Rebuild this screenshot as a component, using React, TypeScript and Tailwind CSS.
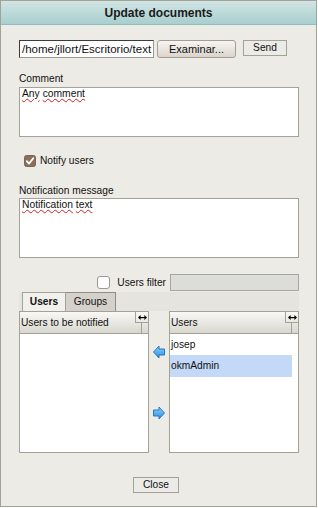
import type { ReactNode } from "react";

// Legacy GWT-style "Update documents" dialog.
function ResizeGrip() {
  return (
    <div className="flex w-[13px] shrink-0 flex-col">
      <div className="flex h-[11px] items-center justify-center border-b border-l border-[#a3a297]">
        <svg width="9" height="5" viewBox="0 0 9 5">
          <path d="M0 2.5 L2.6 0 V5 Z M9 2.5 L6.4 0 V5 Z" fill="#000" />
          <rect x="2" y="2" width="5" height="1.2" fill="#000" />
        </svg>
      </div>
      <div className="ml-[6px] flex-1 border-l border-[#a3a297]" />
    </div>
  );
}

function ListBox({ title, children }: { title: string; children?: ReactNode }) {
  return (
    <div className="flex h-[142px] w-[130px] shrink-0 flex-col border border-[#a3a297] bg-white">
      <div className="flex h-[22px] shrink-0 border-b border-[#a3a297] bg-gradient-to-b from-[#f9f8f5] to-[#d8d7cf]">
        <div className="flex flex-1 items-center pl-[1px] leading-[12px]">{title}</div>
        <ResizeGrip />
      </div>
      <div className="flex flex-col">{children}</div>
    </div>
  );
}

function Arrow({ dir }: { dir: "left" | "right" }) {
  return (
    <svg width="12" height="14" viewBox="0 0 12 14" className={dir === "right" ? "-scale-x-100" : ""}>
      <defs>
        <linearGradient id={`ag-${dir}`} x1="0" y1="0" x2="0" y2="1">
          <stop offset="0" stopColor="#8fd0fb" />
          <stop offset="1" stopColor="#2a8ee0" />
        </linearGradient>
      </defs>
      <path d="M0.5 7 L6 1 V4 H11.5 V10 H6 V13 Z" fill={`url(#ag-${dir})`} stroke="#2477c4" strokeWidth="1" strokeLinejoin="round" />
    </svg>
  );
}

const squiggle = "underline decoration-[#d02020] decoration-wavy decoration-1 underline-offset-[1px]";

export default function App() {
  return (
    <div className="min-h-screen bg-white font-['Liberation_Sans',Arial,sans-serif] text-[10.2px] text-[#111]">
      <div className="flex h-[507px] w-[317px] flex-col border border-[#a3a297] bg-[#edebe6]">
        <div className="flex h-[24px] shrink-0 items-center justify-center border-b border-[#8dbdbc] bg-gradient-to-b from-[#d1e5e4] to-[#a8cfce] text-[12px] font-bold text-[#1b1b1b]">
          Update documents
        </div>

        <div className="flex flex-col pl-[18px] pr-[17px]">
          <div className="mt-[15px] flex items-start">
            <div className="h-[18px] w-[135px] overflow-hidden whitespace-nowrap border border-[#9a9a94] border-l-[#3c3c3c] border-t-[#3c3c3c] bg-white pl-[2px] text-[11.5px] leading-[16px]">
              /home/jllort/Escritorio/text
            </div>
            <button
              type="button"
              className="ml-[3px] h-[18px] w-[79px] rounded-[3px] border border-[#a49d94] bg-gradient-to-b from-[#f7f5f2] to-[#dbd5cc] text-[11px] leading-[16px]"
            >
              Examinar...
            </button>
            <button
              type="button"
              className="ml-[7px] h-[16px] w-[44px] border border-[#a3a29a] bg-[#ecebe7] leading-[14px]"
            >
              Send
            </button>
          </div>

          <div className="mt-[15px] leading-[12px]">Comment</div>
          <div className="mt-[2px] h-[50px] border border-[#a3a297] bg-white pl-[2px] text-[10.3px] leading-[12px]">
            <span className={squiggle}>Any</span> <span className={squiggle}>comment</span>
          </div>

          <div className="mt-[18px] flex h-[12px] items-center">
            <svg width="12" height="12" viewBox="0 0 12 12" className="ml-[5px] shrink-0">
              <rect x="0.5" y="0.5" width="11" height="11" rx="2" fill="#8b6f5c" stroke="#7a6453" />
              <path d="M2.8 6.2 L5 8.6 L9.3 3.2" fill="none" stroke="#fff" strokeWidth="1.8" strokeLinecap="round" strokeLinejoin="round" />
            </svg>
            <span className="ml-[4px] leading-[12px]">Notify users</span>
          </div>

          <div className="mt-[18px] leading-[12px]">Notification message</div>
          <div className="mt-[1px] h-[60px] border border-[#a3a297] bg-white pl-[2px] text-[10.3px] leading-[12px]">
            <span className={squiggle}>Notification</span> <span className={squiggle}>text</span>
          </div>

          <div className="mt-[16px] flex h-[17px] items-center justify-end">
            <div className="h-[13px] w-[13px] rounded-[3px] border border-[#9b9b93] bg-white" />
            <span className="ml-[7px] mr-[4px] leading-[12px]">Users filter</span>
            <div className="h-[17px] w-[129px] border border-[#a7a7a0] bg-[#dcdcd9]" />
          </div>

          <div className="mt-[1px] flex h-[19px] bg-[#e6e4df] pl-[3px]">
            <div className="flex w-[44px] items-center justify-center border-l border-r border-t border-[#a3a297] bg-[#f1f0ec] font-bold">
              Users
            </div>
            <div className="flex w-[50px] items-center justify-center border-r border-t border-[#8e8d85] bg-[#d4d1ca]">
              Groups
            </div>
          </div>

          <div className="flex">
            <ListBox title="Users to be notified" />
            <div className="flex w-[20px] shrink-0 flex-col pl-[4px] pt-[34px]">
              <Arrow dir="left" />
              <div className="mt-[47px]">
                <Arrow dir="right" />
              </div>
            </div>
            <ListBox title="Users">
              <div className="flex h-[21px] items-center pl-[1px]">josep</div>
              <div className="mr-[6px] flex h-[22px] items-center bg-[#c4d9f8] pl-[1px]">okmAdmin</div>
            </ListBox>
          </div>

          <div className="mt-[24px] flex justify-center pr-[6px]">
            <button type="button" className="h-[16px] w-[46px] border border-[#a3a29a] bg-[#ecebe7] leading-[14px]">
              Close
            </button>
          </div>
        </div>
      </div>
    </div>
  );
}
